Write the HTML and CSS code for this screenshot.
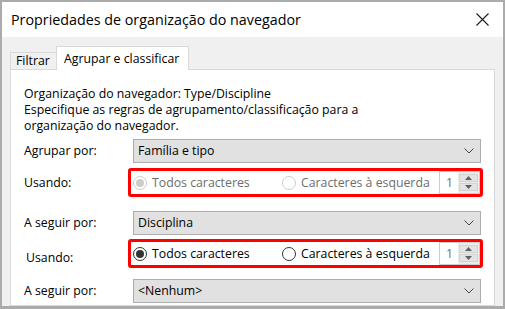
FILE: index.html
```html
<!DOCTYPE html>
<html lang="pt">
<head>
<meta charset="utf-8">
<title>Propriedades de organização do navegador</title>
<link rel="stylesheet" href="styles.css">
</head>
<body>
<div class="window">
  <div class="titlebar">
    <span class="title">Propriedades de organização do navegador</span>
    <svg class="close" width="13" height="13" viewBox="0 0 13 13"><path d="M0.5 0.5 L12.5 12.5 M12.5 0.5 L0.5 12.5" stroke="#1a1a1a" stroke-width="1.1" fill="none"/></svg>
  </div>
  <div class="content">
    <div class="tabs">
      <div class="tab">Filtrar</div>
      <div class="tab tab-active">Agrupar e classificar</div>
    </div>
    <div class="panel">
      <div class="intro">
        <p class="intro-line">Organização do navegador: Type/Discipline</p>
        <p class="intro-line">Especifique as regras de agrupamento/classificação para a</p>
        <p class="intro-line">organização do navegador.</p>
      </div>

      <div class="row row-combo row-1">
        <span class="label label-combo">Agrupar por:</span>
        <div class="combo"><span class="combo-text">Família e tipo</span><svg class="chevron" width="10" height="6" viewBox="0 0 10 6"><polyline points="0.5,0.5 5,5 9.5,0.5" fill="none" stroke="#444" stroke-width="1"/></svg></div>
      </div>

      <div class="row row-using row-2">
        <span class="label label-using">Usando:</span>
        <div class="highlight">
          <div class="option option-first is-disabled"><span class="radio is-checked"></span><span>Todos caracteres</span></div>
          <div class="option is-disabled"><span class="radio"></span><span>Caracteres à esquerda</span></div>
          <div class="spin">
            <span class="spin-field">1</span>
            <span class="spin-buttons">
              <span class="spin-btn"><svg width="7" height="4" viewBox="0 0 7 4"><polygon points="0,4 3.5,0 7,4" fill="#606060"/></svg></span>
              <span class="spin-btn"><svg width="7" height="4" viewBox="0 0 7 4"><polygon points="0,0 7,0 3.5,4" fill="#606060"/></svg></span>
            </span>
          </div>
        </div>
      </div>

      <div class="row row-combo row-3">
        <span class="label label-combo">A seguir por:</span>
        <div class="combo"><span class="combo-text">Disciplina</span><svg class="chevron" width="10" height="6" viewBox="0 0 10 6"><polyline points="0.5,0.5 5,5 9.5,0.5" fill="none" stroke="#444" stroke-width="1"/></svg></div>
      </div>

      <div class="row row-using row-4">
        <span class="label label-using label-shifted">Usando:</span>
        <div class="highlight">
          <div class="option option-first"><span class="radio is-checked"></span><span>Todos caracteres</span></div>
          <div class="option"><span class="radio"></span><span>Caracteres à esquerda</span></div>
          <div class="spin">
            <span class="spin-field">1</span>
            <span class="spin-buttons">
              <span class="spin-btn"><svg width="7" height="4" viewBox="0 0 7 4"><polygon points="0,4 3.5,0 7,4" fill="#606060"/></svg></span>
              <span class="spin-btn"><svg width="7" height="4" viewBox="0 0 7 4"><polygon points="0,0 7,0 3.5,4" fill="#606060"/></svg></span>
            </span>
          </div>
        </div>
      </div>

      <div class="row row-combo row-5">
        <span class="label label-combo">A seguir por:</span>
        <div class="combo"><span class="combo-text">&lt;Nenhum&gt;</span><svg class="chevron" width="10" height="6" viewBox="0 0 10 6"><polyline points="0.5,0.5 5,5 9.5,0.5" fill="none" stroke="#444" stroke-width="1"/></svg></div>
      </div>
    </div>
  </div>
</div>
</body>
</html>
```

FILE: styles.css
```css
* { box-sizing: border-box; }

html, body {
  margin: 0;
  padding: 0;
  background: #ffffff;
}

body {
  font-family: "Open Sans", "Noto Sans", "Liberation Sans", sans-serif;
  font-size: 12.3px;
  line-height: 16px;
  color: #000;
}

.window {
  width: 505px;
  height: 309px;
  border: 2px solid #ababab;
  border-bottom-width: 3px;
  background: #f0f0f0;
  display: flex;
  flex-direction: column;
  overflow: hidden;
}

.titlebar {
  height: 35px;
  flex: none;
  background: #ffffff;
  display: flex;
  align-items: center;
  padding: 0 14px 0 9px;
}

.title {
  font-size: 14.3px;
  color: #000;
  white-space: nowrap;
}

.close {
  margin-left: auto;
  display: block;
}

.content {
  flex: 1;
  min-height: 0;
  padding: 9px 8px 0 8px;
  display: flex;
  flex-direction: column;
  overflow: hidden;
}

.tabs {
  display: flex;
  align-items: flex-end;
  margin-bottom: -1px;
  position: relative;
  z-index: 1;
}

.tab {
  height: 18px;
  width: 46px;
  padding-left: 5px;
  display: flex;
  align-items: center;
  border: 1px solid #d9d9d9;
  border-right: none;
  background: #f0f0f0;
  white-space: nowrap;
}

.tab-active {
  height: 24px;
  width: 133px;
  padding-left: 7px;
  border-right: 1px solid #d9d9d9;
  border-bottom: none;
  background: #ffffff;
}

.panel {
  flex: 1;
  background: #ffffff;
  border: 1px solid #d9d9d9;
  padding: 16px 13px 0 13px;
}

.intro {
  display: flex;
  flex-direction: column;
  gap: 0;
}

.intro-line {
  margin: 0;
  height: 16px;
  line-height: 16px;
  white-space: nowrap;
}

.row {
  display: flex;
  align-items: center;
}

.row-1 { margin-top: 5px; }
.row-2 { margin-top: 5px; }
.row-3 { margin-top: 14px; }
.row-4 { margin-top: 4px; }
.row-5 { margin-top: 11px; }

.label {
  flex: none;
  white-space: nowrap;
}

.label-combo { width: 109px; }
.label-using { width: 104px; }
.label-shifted { padding: 8px 0 0 2px; }

.combo {
  flex: 1;
  height: 24px;
  background: #e1e1e1;
  border: 1px solid #adadad;
  display: flex;
  align-items: center;
  padding: 0 6px 0 4px;
}

.combo-text { white-space: nowrap; }

.chevron {
  margin-left: auto;
  display: block;
}

.highlight {
  flex: 1;
  margin-right: -2px;
  height: 29px;
  border: 3px solid #ff0000;
  border-radius: 3px;
  display: flex;
  align-items: center;
  padding: 0 0 0 2px;
}

.option {
  display: flex;
  align-items: center;
  gap: 5px;
  white-space: nowrap;
  color: #000;
}

.option-first { width: 149px; }

.option.is-disabled { color: #6d6d6d; }

.radio {
  width: 14px;
  height: 14px;
  flex: none;
  border-radius: 50%;
  border: 1px solid #333333;
  background: #ffffff;
  display: flex;
  align-items: center;
  justify-content: center;
}

.radio.is-checked::after {
  content: "";
  width: 8px;
  height: 8px;
  border-radius: 50%;
  background: #333333;
}

.is-disabled .radio { border-color: #cccccc; }
.is-disabled .radio.is-checked::after { background: #cccccc; }

.spin {
  margin-left: auto;
  width: 41px;
  height: 23px;
  border: 1px solid #cccccc;
  display: flex;
  background: #ffffff;
}

.spin-field {
  flex: 1;
  padding-left: 6px;
  color: #6d6d6d;
  display: flex;
  align-items: center;
}

.spin-buttons {
  width: 21px;
  display: flex;
  flex-direction: column;
  gap: 1px;
  padding: 2px 1px;
  background: #ececec;
}

.spin-btn {
  flex: 1;
  background: #e3e3e3;
  border: 1px solid #d2d2d2;
  display: flex;
  align-items: center;
  justify-content: center;
}

.spin-btn svg { display: block; }
```
